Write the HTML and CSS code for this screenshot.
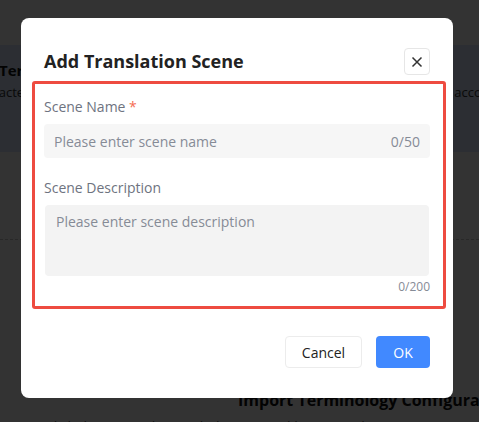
FILE: index.html
```html
<!DOCTYPE html>
<html>
<head>
    <title>Terminology</title>
    <link rel="stylesheet" href="styles.css">
</head>
<body>
    <!-- page behind the dialog -->
    <div class="page">
        <div class="topbar"></div>
        <div class="banner">
            <div class="banner-title">Terminology Management</div>
            <div class="banner-text">characters in the translation will be replaced with all the terms in the list below, accordingly</div>
        </div>
        <div class="table-area"></div>
        <div class="import-block">
            <div class="import-title">Import Terminology Configuration</div>
            <div class="import-text">Click the Import button below to quickly import the existing terminology</div>
        </div>
    </div>

    <div class="mask"></div>

    <div class="dialog">
        <div class="dialog-header">
            <span class="dialog-title">Add Translation Scene</span>
            <button class="close-btn" aria-label="close">
                <svg width="12" height="12" viewBox="0 0 12 12">
                    <path d="M1.5 1.5 L10.5 10.5 M10.5 1.5 L1.5 10.5" stroke="#333" stroke-width="1.5" fill="none"/>
                </svg>
            </button>
        </div>

        <div class="form-box">
            <div class="form-label">Scene Name <span class="required">*</span></div>
            <div class="text-input">
                <span class="placeholder">Please enter scene name</span>
                <span class="counter">0/50</span>
            </div>

            <div class="form-label second">Scene Description</div>
            <div class="text-area">
                <span class="placeholder">Please enter scene description</span>
            </div>
            <div class="area-counter">0/200</div>
        </div>

        <div class="dialog-footer">
            <button class="btn btn-cancel">Cancel</button>
            <button class="btn btn-ok">OK</button>
        </div>
    </div>
</body>
</html>
```

FILE: styles.css
```css
body {
    margin: 0;
    padding: 0;
    font-family: "Open Sans", "Noto Sans", Arial, sans-serif;
    width: 479px;
    height: 422px;
    overflow: hidden;
    position: relative;
}

/* background page */
.page {
    background: #ffffff;
    height: 422px;
    overflow: hidden;
}

.topbar {
    height: 45px;
    background: #ffffff;
}

.banner {
    height: 107px;
    background: #d9e6fc;
    padding-top: 14px;
    box-sizing: border-box;
    white-space: nowrap;
}

.banner-title {
    font-size: 15px;
    font-weight: bold;
    color: #111;
    line-height: 22px;
    margin-left: -1px;
}

.banner-text {
    font-size: 13px;
    color: #333;
    line-height: 22px;
    margin-left: -28px;
}

.table-area {
    height: 87px;
    border-bottom: 1px dashed #c8c8c8;
}

.import-block {
    padding-top: 149px;
    white-space: nowrap;
}

.import-title {
    font-size: 16px;
    font-weight: bold;
    color: #111;
    padding-left: 238px;
    line-height: 22px;
}

.import-text {
    font-size: 14px;
    color: #555;
    padding-left: 45px;
    margin-top: 6px;
}

.mask {
    position: fixed;
    inset: 0;
    background: rgba(0, 0, 0, 0.8);
}

/* dialog */
.dialog {
    position: fixed;
    left: 21px;
    top: 18px;
    width: 432px;
    box-sizing: border-box;
    background: #ffffff;
    border-radius: 8px;
    padding: 30px 23px 30px 23px;
}

.dialog-header {
    display: flex;
    justify-content: space-between;
    align-items: center;
    height: 27px;
}

.dialog-title {
    font-size: 18px;
    font-weight: bold;
    color: #222;
    line-height: 27px;
}

.close-btn {
    width: 26px;
    height: 27px;
    border: 1px solid #e6e6e6;
    border-radius: 4px;
    background: #fff;
    display: flex;
    align-items: center;
    justify-content: center;
    padding: 0;
}

.form-box {
    margin: 6px -16px 0 -12px;
    border: 3px solid #ee4b40;
    border-radius: 3px;
    padding: 13px 13px 11px 9px;
}

.form-label {
    font-size: 14px;
    color: #6e7380;
    line-height: 20px;
    margin-bottom: 7px;
}

.form-label.second {
    margin-top: 20px;
    margin-bottom: 7px;
}

.required {
    color: #f56c52;
}

.text-input {
    height: 34px;
    background: #f6f6f6;
    border-radius: 4px;
    display: flex;
    align-items: center;
    justify-content: space-between;
    padding: 0 10px;
}

.placeholder {
    font-size: 14px;
    color: #868b96;
}

.counter {
    font-size: 14px;
    color: #868b96;
}

.text-area {
    height: 71px;
    background: #f3f3f3;
    border-radius: 4px;
    margin: 0 1px;
    padding: 6px 11px;
    box-sizing: border-box;
    line-height: 20px;
}

.area-counter {
    text-align: right;
    font-size: 12px;
    color: #868b96;
    line-height: 16px;
    margin-top: 3px;
}

.dialog-footer {
    display: flex;
    justify-content: flex-end;
    gap: 14px;
    margin-top: 27px;
}

.btn {
    height: 32px;
    border-radius: 4px;
    font-family: inherit;
    font-size: 14px;
    cursor: pointer;
}

.btn-cancel {
    width: 77px;
    background: #fff;
    border: 1px solid #ececec;
    color: #222;
}

.btn-ok {
    width: 54px;
    background: #4189ff;
    border: none;
    color: #fff;
}
```
